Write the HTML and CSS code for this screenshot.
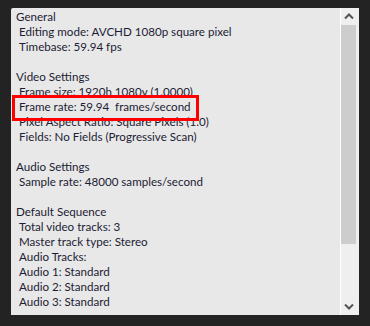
FILE: index.html
```html
<!DOCTYPE html>
<html lang="en">
<head>
  <meta charset="UTF-8">
  <title>Sequence Settings</title>
  <link rel="stylesheet" href="styles.css">
</head>
<body>
  <div class="panel">
    <div class="info">
      <div class="head">General</div>
      <div class="item">Editing mode: AVCHD 1080p square pixel</div>
      <div class="item">Timebase: 59.94 fps</div>
      <div class="blank"></div>
      <div class="head">Video Settings</div>
      <div class="item">Frame size: 1920h 1080v (1.0000)</div>
      <div class="item highlight">Frame rate: 59.94&nbsp; frames/second</div>
      <div class="item">Pixel Aspect Ratio: Square Pixels (1.0)</div>
      <div class="item">Fields: No Fields (Progressive Scan)</div>
      <div class="blank"></div>
      <div class="head">Audio Settings</div>
      <div class="item">Sample rate: 48000 samples/second</div>
      <div class="blank"></div>
      <div class="head">Default Sequence</div>
      <div class="item">Total video tracks: 3</div>
      <div class="item">Master track type: Stereo</div>
      <div class="item">Audio Tracks:</div>
      <div class="item">Audio 1: Standard</div>
      <div class="item">Audio 2: Standard</div>
      <div class="item">Audio 3: Standard</div>
    </div>
    <div class="scrollbar">
      <div class="arrow">
        <svg width="10" height="7" viewBox="0 0 10 7"><path d="M1 5.5 L5 1.5 L9 5.5" fill="none" stroke="#555" stroke-width="2"/></svg>
      </div>
      <div class="thumb"></div>
      <div class="track"></div>
      <div class="arrow">
        <svg width="10" height="7" viewBox="0 0 10 7"><path d="M1 1.5 L5 5.5 L9 1.5" fill="none" stroke="#555" stroke-width="2"/></svg>
      </div>
    </div>
  </div>
</body>
</html>
```

FILE: styles.css
```css
* {
  box-sizing: border-box;
}
body {
  margin: 0;
  background-color: #232323;
  font-family: Lato, "Open Sans", sans-serif;
  width: 370px;
  height: 326px;
  padding: 8px 11px 11px 11px;
}
.panel {
  display: flex;
  width: 348px;
  height: 307px;
  background-color: #e8e8e8;
  border-radius: 2px 2px 0 0;
}
.info {
  flex: 1;
  padding: 1px 0 0 5px;
  font-size: 11.6px;
  line-height: 15px;
  color: #1c1c34;
  white-space: nowrap;
}
.head {
  height: 15px;
}
.item {
  height: 15px;
  padding-left: 3px;
}
.blank {
  height: 15px;
}
.highlight {
  position: relative;
}
.highlight::after {
  content: "";
  position: absolute;
  left: -4px;
  top: -4px;
  width: 181px;
  height: 20px;
  border: 3px solid #ff0000;
}
.scrollbar {
  width: 19px;
  display: flex;
  flex-direction: column;
  border-left: 1px solid #ffffff;
  padding-right: 3px;
  background-color: #efefef;
}
.arrow {
  height: 17px;
  display: flex;
  align-items: center;
  justify-content: center;
}
.thumb {
  height: 219px;
  background-color: #cdcdcd;
}
.track {
  flex: 1;
}
```
